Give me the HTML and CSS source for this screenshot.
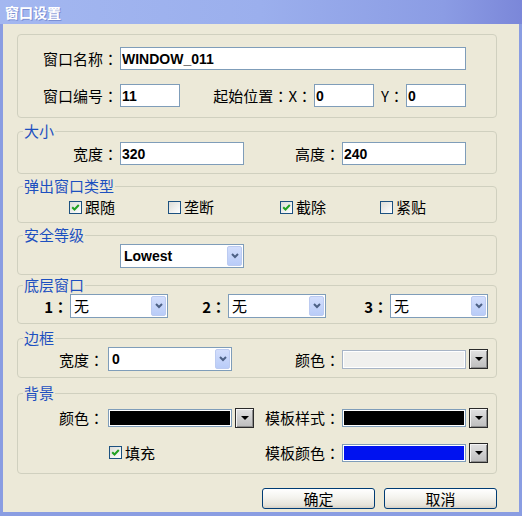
FILE: index.html
```html
<!DOCTYPE html>
<html>
<head>
  <meta charset="utf-8">
  <title>窗口设置</title>
  <link rel="stylesheet" href="styles.css">
</head>
<body>
  <div class="window">
    <div class="titlebar">窗口设置</div>
    <div class="client">

      <fieldset class="group g-name">
        <div class="row">
          <span class="lbl lbl-main">窗口名称<span class="colon">：</span></span>
          <input class="txt txt-long" type="text" value="WINDOW_011">
        </div>
        <div class="row">
          <span class="lbl lbl-main">窗口编号<span class="colon">：</span></span>
          <input class="txt txt-num" type="text" value="11">
          <span class="lbl lbl-pos">起始位置<span class="colon">：</span>X<span class="colon">：</span></span>
          <input class="txt txt-num" type="text" value="0">
          <span class="lbl lbl-y">Y<span class="colon">：</span></span>
          <input class="txt txt-num" type="text" value="0">
        </div>
      </fieldset>

      <fieldset class="group g-size">
        <legend>大小</legend>
        <div class="row">
          <span class="lbl lbl-main">宽度<span class="colon">：</span></span>
          <input class="txt txt-mid" type="text" value="320">
          <span class="lbl lbl-height">高度<span class="colon">：</span></span>
          <input class="txt txt-mid" type="text" value="240">
        </div>
      </fieldset>

      <fieldset class="group g-popup">
        <legend>弹出窗口类型</legend>
        <div class="checks">
          <label class="check"><span class="box on"><svg width="9" height="9" viewBox="0 0 9 9"><path d="M1.2 4.2 L3.5 6.5 L7.8 2" fill="none" stroke="#21a121" stroke-width="2"/></svg></span>跟随</label>
          <label class="check"><span class="box"></span>垄断</label>
          <label class="check"><span class="box on"><svg width="9" height="9" viewBox="0 0 9 9"><path d="M1.2 4.2 L3.5 6.5 L7.8 2" fill="none" stroke="#21a121" stroke-width="2"/></svg></span>截除</label>
          <label class="check"><span class="box"></span>紧贴</label>
        </div>
      </fieldset>

      <fieldset class="group g-level">
        <legend>安全等级</legend>
        <div class="row row-level">
          <div class="select select-mid bold">
            <span class="val">Lowest</span>
            <span class="arrow"><svg width="8" height="6" viewBox="0 0 8 6"><path d="M1 1 L4 4 L7 1" fill="none" stroke="#4d6185" stroke-width="2"/></svg></span>
          </div>
        </div>
      </fieldset>

      <fieldset class="group g-under">
        <legend>底层窗口</legend>
        <div class="row">
          <span class="lbl lbl-n1">1<span class="colon">：</span></span>
          <div class="select select-small">
            <span class="val">无</span>
            <span class="arrow"><svg width="8" height="6" viewBox="0 0 8 6"><path d="M1 1 L4 4 L7 1" fill="none" stroke="#4d6185" stroke-width="2"/></svg></span>
          </div>
          <span class="lbl lbl-n2">2<span class="colon">：</span></span>
          <div class="select select-small">
            <span class="val">无</span>
            <span class="arrow"><svg width="8" height="6" viewBox="0 0 8 6"><path d="M1 1 L4 4 L7 1" fill="none" stroke="#4d6185" stroke-width="2"/></svg></span>
          </div>
          <span class="lbl lbl-n3">3<span class="colon">：</span></span>
          <div class="select select-small">
            <span class="val">无</span>
            <span class="arrow"><svg width="8" height="6" viewBox="0 0 8 6"><path d="M1 1 L4 4 L7 1" fill="none" stroke="#4d6185" stroke-width="2"/></svg></span>
          </div>
        </div>
      </fieldset>

      <fieldset class="group g-border">
        <legend>边框</legend>
        <div class="row">
          <span class="lbl lbl-short">宽度<span class="colon">：</span></span>
          <div class="select select-mid bold">
            <span class="val">0</span>
            <span class="arrow"><svg width="8" height="6" viewBox="0 0 8 6"><path d="M1 1 L4 4 L7 1" fill="none" stroke="#4d6185" stroke-width="2"/></svg></span>
          </div>
          <span class="lbl lbl-color">颜色<span class="colon">：</span></span>
          <span class="swatch swatch-off"></span>
          <span class="cbtn"></span>
        </div>
      </fieldset>

      <fieldset class="group g-back">
        <legend>背景</legend>
        <div class="row">
          <span class="lbl lbl-short">颜色<span class="colon">：</span></span>
          <span class="swatch swatch-black"></span>
          <span class="cbtn"></span>
          <span class="lbl lbl-tpl">模板样式<span class="colon">：</span></span>
          <span class="swatch swatch-black"></span>
          <span class="cbtn"></span>
        </div>
        <div class="row">
          <div class="fill-cell">
            <label class="check"><span class="box on"><svg width="9" height="9" viewBox="0 0 9 9"><path d="M1.2 4.2 L3.5 6.5 L7.8 2" fill="none" stroke="#21a121" stroke-width="2"/></svg></span>填充</label>
          </div>
          <span class="lbl lbl-tpl">模板颜色<span class="colon">：</span></span>
          <span class="swatch swatch-blue"></span>
          <span class="cbtn"></span>
        </div>
      </fieldset>

      <div class="buttons">
        <button class="btn">确定</button>
        <button class="btn">取消</button>
      </div>

    </div>
  </div>
</body>
</html>
```

FILE: styles.css
```css
body { margin: 0; background: #fff; font-family: "Noto Sans CJK SC", sans-serif; font-size: 15px; color: #000; }

.window { width: 522px; height: 516px; display: flex; flex-direction: column; }
.titlebar {
  height: 24px;
  flex: none;
  padding-left: 5px;
  line-height: 25px;
  font-size: 14px;
  font-weight: bold;
  color: #fff;
  text-shadow: 1px 1px 0 #7a8ed2;
  background: linear-gradient(to right, #a3b7f0 0%, #9bafed 50%, #8b9ce4 85%, #7b87d9 100%);
}
.client {
  flex: 1;
  background: #ece9d8;
  border: solid #8a9de2;
  border-width: 0 3px 4px 3px;
}

/* group boxes */
.group {
  width: 480px;
  box-sizing: border-box;
  margin: 4px 0 0 14px;
  padding: 0;
  min-width: 0;
  border: 1px solid #d0d0bf;
  border-radius: 4px;
}
.group legend {
  margin-left: 5px;
  padding: 0 1px;
  line-height: 16px;
  color: #1d50c0;
}
.g-name { margin-top: 10px; padding: 12px 0 10px; }
.g-name .row + .row { margin-top: 14px; }
.g-size { margin-top: 5px; padding: 3px 0 8px; }
.g-popup { padding: 5px 0 7px; }
.g-level { padding: 1px 0 6px; }
.g-under { margin-top: 2px; padding: 1px 0 5px; }
.g-border { margin-top: 6px; padding: 1px 0 6px; }
.g-back { margin-top: 7px; padding: 5px 0 9px; }
.g-back .row + .row { margin-top: 12px; }

.row { display: flex; align-items: center; }
.lbl { flex: none; text-align: right; white-space: nowrap; line-height: 23px; margin-right: 2px; }
/* centred full-width colon, as the dialog font draws it */
.colon { font-family: "Noto Sans CJK JP", sans-serif; }
.lbl-main { width: 100px; }
.lbl-pos { width: 132px; }
.lbl-y { width: 30px; }
.lbl-height { width: 96px; }
.lbl-n1, .lbl-n2, .lbl-n3 { font-weight: bold; }
.lbl-n1 { width: 50px; }
.lbl-n2 { width: 58px; }
.lbl-n3 { width: 62px; }
.lbl-short { width: 86px; margin-right: 4px; }
.lbl-color { width: 108px; }
.lbl-tpl { width: 86px; }

/* text boxes */
.txt {
  flex: none;
  height: 23px;
  box-sizing: border-box;
  margin: 0;
  padding: 0 1px;
  border: 1px solid #7f9db9;
  background: #fff;
  font: bold 14px "Liberation Sans", Arial, sans-serif;
  color: #000;
}
.txt-long { width: 346px; }
.txt-num { width: 60px; }
.txt-mid { width: 124px; }

/* combo boxes */
.select {
  flex: none;
  display: flex;
  height: 24px;
  box-sizing: border-box;
  border: 1px solid #7f9db9;
  background: #fff;
}
.select-mid { width: 124px; }
.select-small { width: 98px; }
.select .val { flex: 1; padding-left: 3px; line-height: 22px; }
.select.bold .val { font: bold 14px/22px "Liberation Sans", Arial, sans-serif; }
.select .arrow {
  width: 15px;
  margin: 1px;
  box-sizing: border-box;
  border: 1px solid #bccbf1;
  border-radius: 2px;
  background: linear-gradient(#d3defc, #b9ccf8);
  display: flex;
  align-items: center;
  justify-content: center;
}
.row-level { padding-left: 102px; }

/* checkboxes */
.checks { display: grid; grid-template-columns: 99px 112px 100px auto; padding-left: 51px; height: 16px; align-items: center; }
.check { display: flex; align-items: center; line-height: 16px; }
.box {
  width: 13px;
  height: 13px;
  box-sizing: border-box;
  margin-right: 3px;
  border: 1px solid #1c5180;
  background: linear-gradient(135deg, #dcdcd7, #fff);
  display: flex;
  align-items: center;
  justify-content: center;
}
.fill-cell { width: 236px; flex: none; padding-left: 91px; box-sizing: border-box; height: 20px; display: flex; align-items: center; }

/* colour pickers */
.swatch {
  flex: none;
  width: 124px;
  height: 19px;
  box-sizing: border-box;
  border: 1px solid #7f9db9;
  box-shadow: inset 0 0 0 1px #fff;
}
.swatch-off { background: #f0f0ee; border-color: #a7b4c6; }
.swatch-black { background: #000; }
.swatch-blue { background: #0012f0; }
.cbtn {
  flex: none;
  width: 19px;
  height: 20px;
  box-sizing: border-box;
  margin-left: 3px;
  border: 1px solid #2a2a2a;
  background: linear-gradient(#e2e2e2, #bdbdbd);
  box-shadow: inset 1px 1px 0 #f4f4f4, inset -1px -1px 0 #8c8c8c;
  display: flex;
  align-items: center;
  justify-content: center;
}
.cbtn::after {
  content: "";
  border-left: 4px solid transparent;
  border-right: 4px solid transparent;
  border-top: 4px solid #000;
}
.g-back .swatch { height: 18px; }

/* dialog buttons */
.buttons { display: flex; justify-content: flex-end; gap: 9px; width: 480px; margin: 14px 0 0 14px; }
.btn {
  width: 113px;
  height: 21px;
  padding: 0;
  border: 1px solid #003c74;
  border-radius: 3px;
  background: linear-gradient(#ffffff, #f4f3ee 45%, #e6e3d9 85%, #d6d0c5);
  font-family: "Noto Sans CJK SC", sans-serif;
  font-size: 15px;
  line-height: 19px;
  color: #000;
}
```
